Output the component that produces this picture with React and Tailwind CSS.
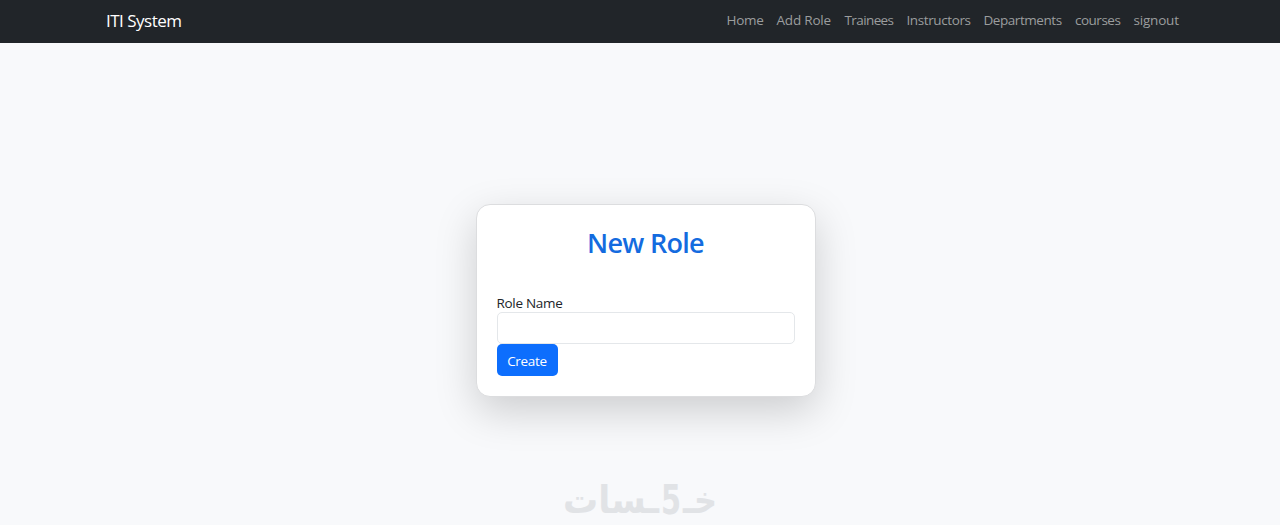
import React, { useState } from "react";

const links = [
  { name: "Home", style: "w-[36.5px] tracking-[-0.3px]" },
  { name: "Add Role", style: "w-[54.5px] tracking-[-0.2px]" },
  { name: "Trainees", style: "w-[48.5px] tracking-[-0.6px]" },
  { name: "Instructors", style: "w-[63.5px] tracking-[-0.4px]" },
  { name: "Departments", style: "w-[78px] tracking-[-0.45px]" },
  { name: "courses", style: "w-[45px] tracking-[-0.5px]" },
  { name: "signout", style: "w-[45.5px] tracking-[-0.2px]" },
];

const Navbar = () => {
  return (
    <nav className="h-[43px] bg-[#212529] pl-[106px] pr-[101px] flex items-center justify-between">
      <a href="#" className="text-[17px] leading-6 tracking-[-0.5px] text-white whitespace-nowrap pb-0.5">
        ITI System
      </a>
      <ul className="flex gap-[13.5px] text-[13.5px] leading-5 text-[#9b9d9e] pb-[3px]">
        {links.map((link) => (
          <li key={link.name} className={`${link.style} whitespace-nowrap`}>
            <a href="#">{link.name}</a>
          </li>
        ))}
      </ul>
    </nav>
  );
};

const RoleForm = () => {
  const [role, setRole] = useState("");

  return (
    <form
      onSubmit={(e) => e.preventDefault()}
      className="w-[340px] h-[193px] bg-white border border-[#dcdddf] rounded-[14px] shadow-[0_14px_41px_rgba(0,0,0,0.175)] px-5 pt-[22px]"
    >
      <h2 className="text-[27px] leading-8 font-semibold tracking-[-0.7px] text-center text-[#146bdf]">
        New Role
      </h2>
      <label htmlFor="role" className="block pt-[35px] text-[13.5px] leading-[18px] tracking-[-0.3px] text-[#212529]">
        Role Name
      </label>
      <input
        id="role"
        value={role}
        onChange={(e) => setRole(e.target.value)}
        className="block w-full h-8 border border-[#e4e7ea] rounded-[5px] px-2.5 outline-none"
      />
      <button className="block w-[61px] h-8 bg-[#0d6efd] text-white text-[13.5px] tracking-[-0.3px] rounded-[5px] pt-0.5">
        Create
      </button>
    </form>
  );
};

const Brand = () => {
  return (
    <svg
      viewBox="0 0 156 44"
      className="w-[156px] h-11 overflow-visible fill-[#e1e3e6] font-['DejaVu_Sans',sans-serif] font-bold"
    >
      <text x="1" y="36" textLength="96" lengthAdjust="spacingAndGlyphs" fontSize="38">
        ـسات
      </text>
      <text x="99" y="36.5" textLength="20" lengthAdjust="spacingAndGlyphs" fontSize="41">
        5
      </text>
      <text x="121" y="36" textLength="34" lengthAdjust="spacingAndGlyphs" fontSize="38">
        خـ
      </text>
    </svg>
  );
};

const App = () => {
  return (
    <div className="h-[525px] bg-[#f8f9fb] font-['Open_Sans','Noto_Sans',sans-serif] flex flex-col overflow-hidden">
      <Navbar />
      <main className="flex flex-col items-center">
        <div className="mt-[161px] ml-[11px]">
          <RoleForm />
        </div>
        <div className="mt-[80px]">
          <Brand />
        </div>
      </main>
    </div>
  );
};

export default App;
